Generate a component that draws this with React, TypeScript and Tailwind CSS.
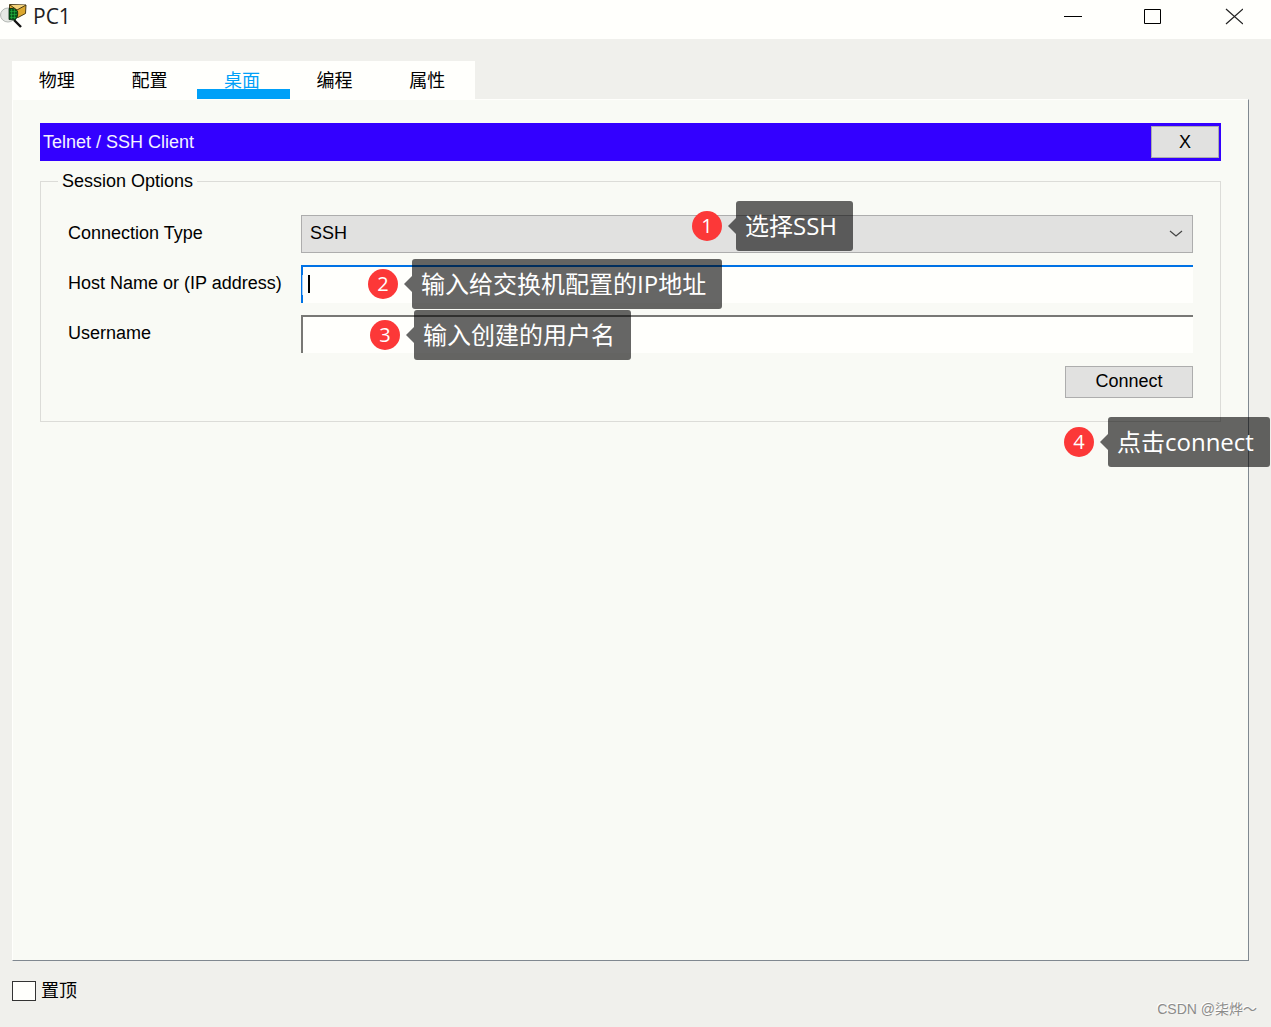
import { useState } from "react";

const tabs = ["物理", "配置", "桌面", "编程", "属性"];

function AppIcon() {
  return (
    <svg viewBox="0 0 28 26" className="h-[26px] w-7" aria-hidden="true">
      <path d="M14 17 L21 24" stroke="#111" strokeWidth="2.4" />
      <ellipse cx="8" cy="12" rx="7.5" ry="7" fill="#e6e8e4" stroke="#b4b8b4" />
      <path d="M9.5 1.5 L26 2 L25.5 10.5 L18 14.5 L9.5 12 Z" fill="#dba72f" stroke="#3a2c0a" strokeWidth="0.9" />
      <path d="M10 2 L17 7 L26 2" fill="#f3d27a" stroke="#3a2c0a" strokeWidth="0.9" />
      <path d="M9 5.5 Q14 4 17.5 8 Q18.5 14 15 17 L9 16.5 Z" fill="#07591b" stroke="#062a0e" strokeWidth="0.8" />
      <path d="M10 8.5 H17 M10 11.5 H17 M10 14.5 H16 M11.5 6 V16 M14.5 6 V16" stroke="#28c447" strokeWidth="0.5" />
    </svg>
  );
}

function Callout({ step, text, className }: { step: number; text: string; className: string }) {
  return (
    <div className={`pointer-events-none absolute z-10 flex items-center whitespace-nowrap text-white font-['Open_Sans','Noto_Sans_CJK_SC',sans-serif] ${className}`}>
      <span className="mr-1.5 flex size-[30px] items-center justify-center rounded-full bg-[#fc3838] text-xl leading-5">
        {step}
      </span>
      <svg viewBox="0 0 8 16" className="h-4 w-2" aria-hidden="true">
        <path d="M8 0 L0 8 L8 16 Z" fill="#000" fillOpacity="0.6" />
      </svg>
      <span className="h-[50px] rounded-[3px] bg-black/60 pl-[9px] pr-4 text-2xl leading-[50px]">{text}</span>
    </div>
  );
}

export default function App() {
  const [activeTab, setActiveTab] = useState("桌面");
  const [type, setType] = useState("SSH");
  const [host, setHost] = useState("");
  const [username, setUsername] = useState("");
  const [onTop, setOnTop] = useState(false);

  return (
    <div className="flex min-h-screen flex-col overflow-hidden bg-[#f0f0ec] text-lg leading-5 text-black font-['Liberation_Sans','Noto_Sans_CJK_SC',sans-serif]">
      <header className="flex h-[39px] items-start justify-between bg-[#fffffc]">
        <div className="flex items-center gap-[5px] pt-[3px]">
          <AppIcon />
          <h1 className="text-[21px] leading-6 text-[#222] font-['Open_Sans',sans-serif]">PC1</h1>
        </div>
        <div className="flex h-8">
          <button aria-label="Minimize" className="flex w-20 items-center justify-center">
            <svg viewBox="0 0 18 18" className="size-[18px]">
              <path d="M0 9.5 H18" stroke="#000" />
            </svg>
          </button>
          <button aria-label="Maximize" className="flex w-20 items-center justify-center">
            <svg viewBox="0 0 18 18" className="size-[18px]">
              <path d="M0.5 2.5 H16.5 V16.5 H0.5 Z" stroke="#000" fill="none" />
            </svg>
          </button>
          <button aria-label="Close" className="flex w-[78px] items-center justify-center pl-1">
            <svg viewBox="0 0 18 18" className="size-[18px]">
              <path d="M1 2 L18 17 M18 2 L1 17" stroke="#222" strokeWidth="1.2" />
            </svg>
          </button>
        </div>
      </header>

      <nav className="ml-3 mt-[22px] grid h-[38px] w-[463px] grid-cols-5 bg-[#fffffc]">
        {tabs.map((tab) => (
          <button
            key={tab}
            onClick={() => setActiveTab(tab)}
            className={
              tab === activeTab
                ? "border-b-10 border-[#00a0f8] pr-[3px] pt-3 leading-4 text-[#00a0f8]"
                : "border-b-10 border-transparent pr-[3px] pt-3 leading-4"
            }
          >
            {tab}
          </button>
        ))}
      </nav>

      <main className="ml-3 mr-[22px] flex-1 border border-b-[#808890] border-l-[#fffffc] border-r-[#808890] border-t-[#fffffc] bg-[#f9faf5] px-[27px] pt-[23px]">
        <div className="flex h-[38px] items-center justify-between bg-[#3300ff] pl-[3px] pr-0.5">
          <h2 className="text-[#f4f2ff]">Telnet / SSH Client</h2>
          <button className="h-8 w-[68px] border border-[#adadad] bg-[#e1e1e0]">X</button>
        </div>

        <fieldset className="mt-[10px] border border-[#dcdcd8] px-[27px] pb-[23px]">
          <legend className="-ml-2.5 px-1">Session Options</legend>
          <div className="grid grid-cols-[233px_1fr] gap-y-3 pt-6">
            <label htmlFor="type" className="pt-2">Connection Type</label>
            <div className="relative">
              <select
                id="type"
                value={type}
                onChange={(e) => setType(e.target.value)}
                className="block h-[38px] w-full appearance-none border border-[#adadad] bg-[#e1e1e0] px-2 pb-0.5"
              >
                <option>SSH</option>
                <option>Telnet</option>
              </select>
              <svg viewBox="0 0 14 8" className="pointer-events-none absolute right-2.5 top-[15px] h-2 w-3.5">
                <path d="M1 1 L7 6 L13 1" stroke="#444" strokeWidth="1.2" fill="none" />
              </svg>
              <Callout step={1} text="选择SSH" className="left-[391px] -top-3.5" />
            </div>

            <label htmlFor="host" className="pt-2">Host Name or (IP address)</label>
            <div className="relative">
              <input
                id="host"
                value={host}
                onChange={(e) => setHost(e.target.value)}
                className="block h-[38px] w-full border-l-2 border-t-2 border-[#0072e5] bg-[#fffffc] px-2 outline-none"
              />
              <span className="absolute left-px top-2.5 h-5 w-px bg-[#9fd0ff]" />
              <span className="absolute left-[7px] top-2.5 h-[18px] w-0.5 bg-black" />
              <Callout step={2} text="输入给交换机配置的IP地址" className="left-[67px] -top-1.5" />
            </div>

            <label htmlFor="username" className="pt-2">Username</label>
            <div className="relative">
              <input
                id="username"
                value={username}
                onChange={(e) => setUsername(e.target.value)}
                className="block h-[38px] w-full border-l-2 border-t-2 border-[#787875] bg-[#fffffc] px-2 outline-none"
              />
              <Callout step={3} text="输入创建的用户名" className="left-[69px] -top-[5px]" />
            </div>

            <div className="relative col-start-2 mt-px w-32 justify-self-end">
              <button className="block h-8 w-full border border-[#adadad] bg-[#e1e1e0] pb-0.5">Connect</button>
              <Callout step={4} text="点击connect" className="-left-px top-[51px]" />
            </div>
          </div>
        </fieldset>
      </main>

      <footer className="flex h-[66px] items-start justify-between pl-3 pr-3.5">
        <label className="flex items-center gap-[5px] pt-5">
          <input
            type="checkbox"
            checked={onTop}
            onChange={(e) => setOnTop(e.target.checked)}
            className="h-5 w-6 appearance-none border border-[#333] bg-[#fffffc] checked:bg-[#00a0f8]"
          />
          置顶
        </label>
        <p className="pt-[38px] text-sm leading-5 text-[#8c8c8a] [text-shadow:-1px_-1px_0_#fff]">CSDN @柒烨～</p>
      </footer>
    </div>
  );
}
